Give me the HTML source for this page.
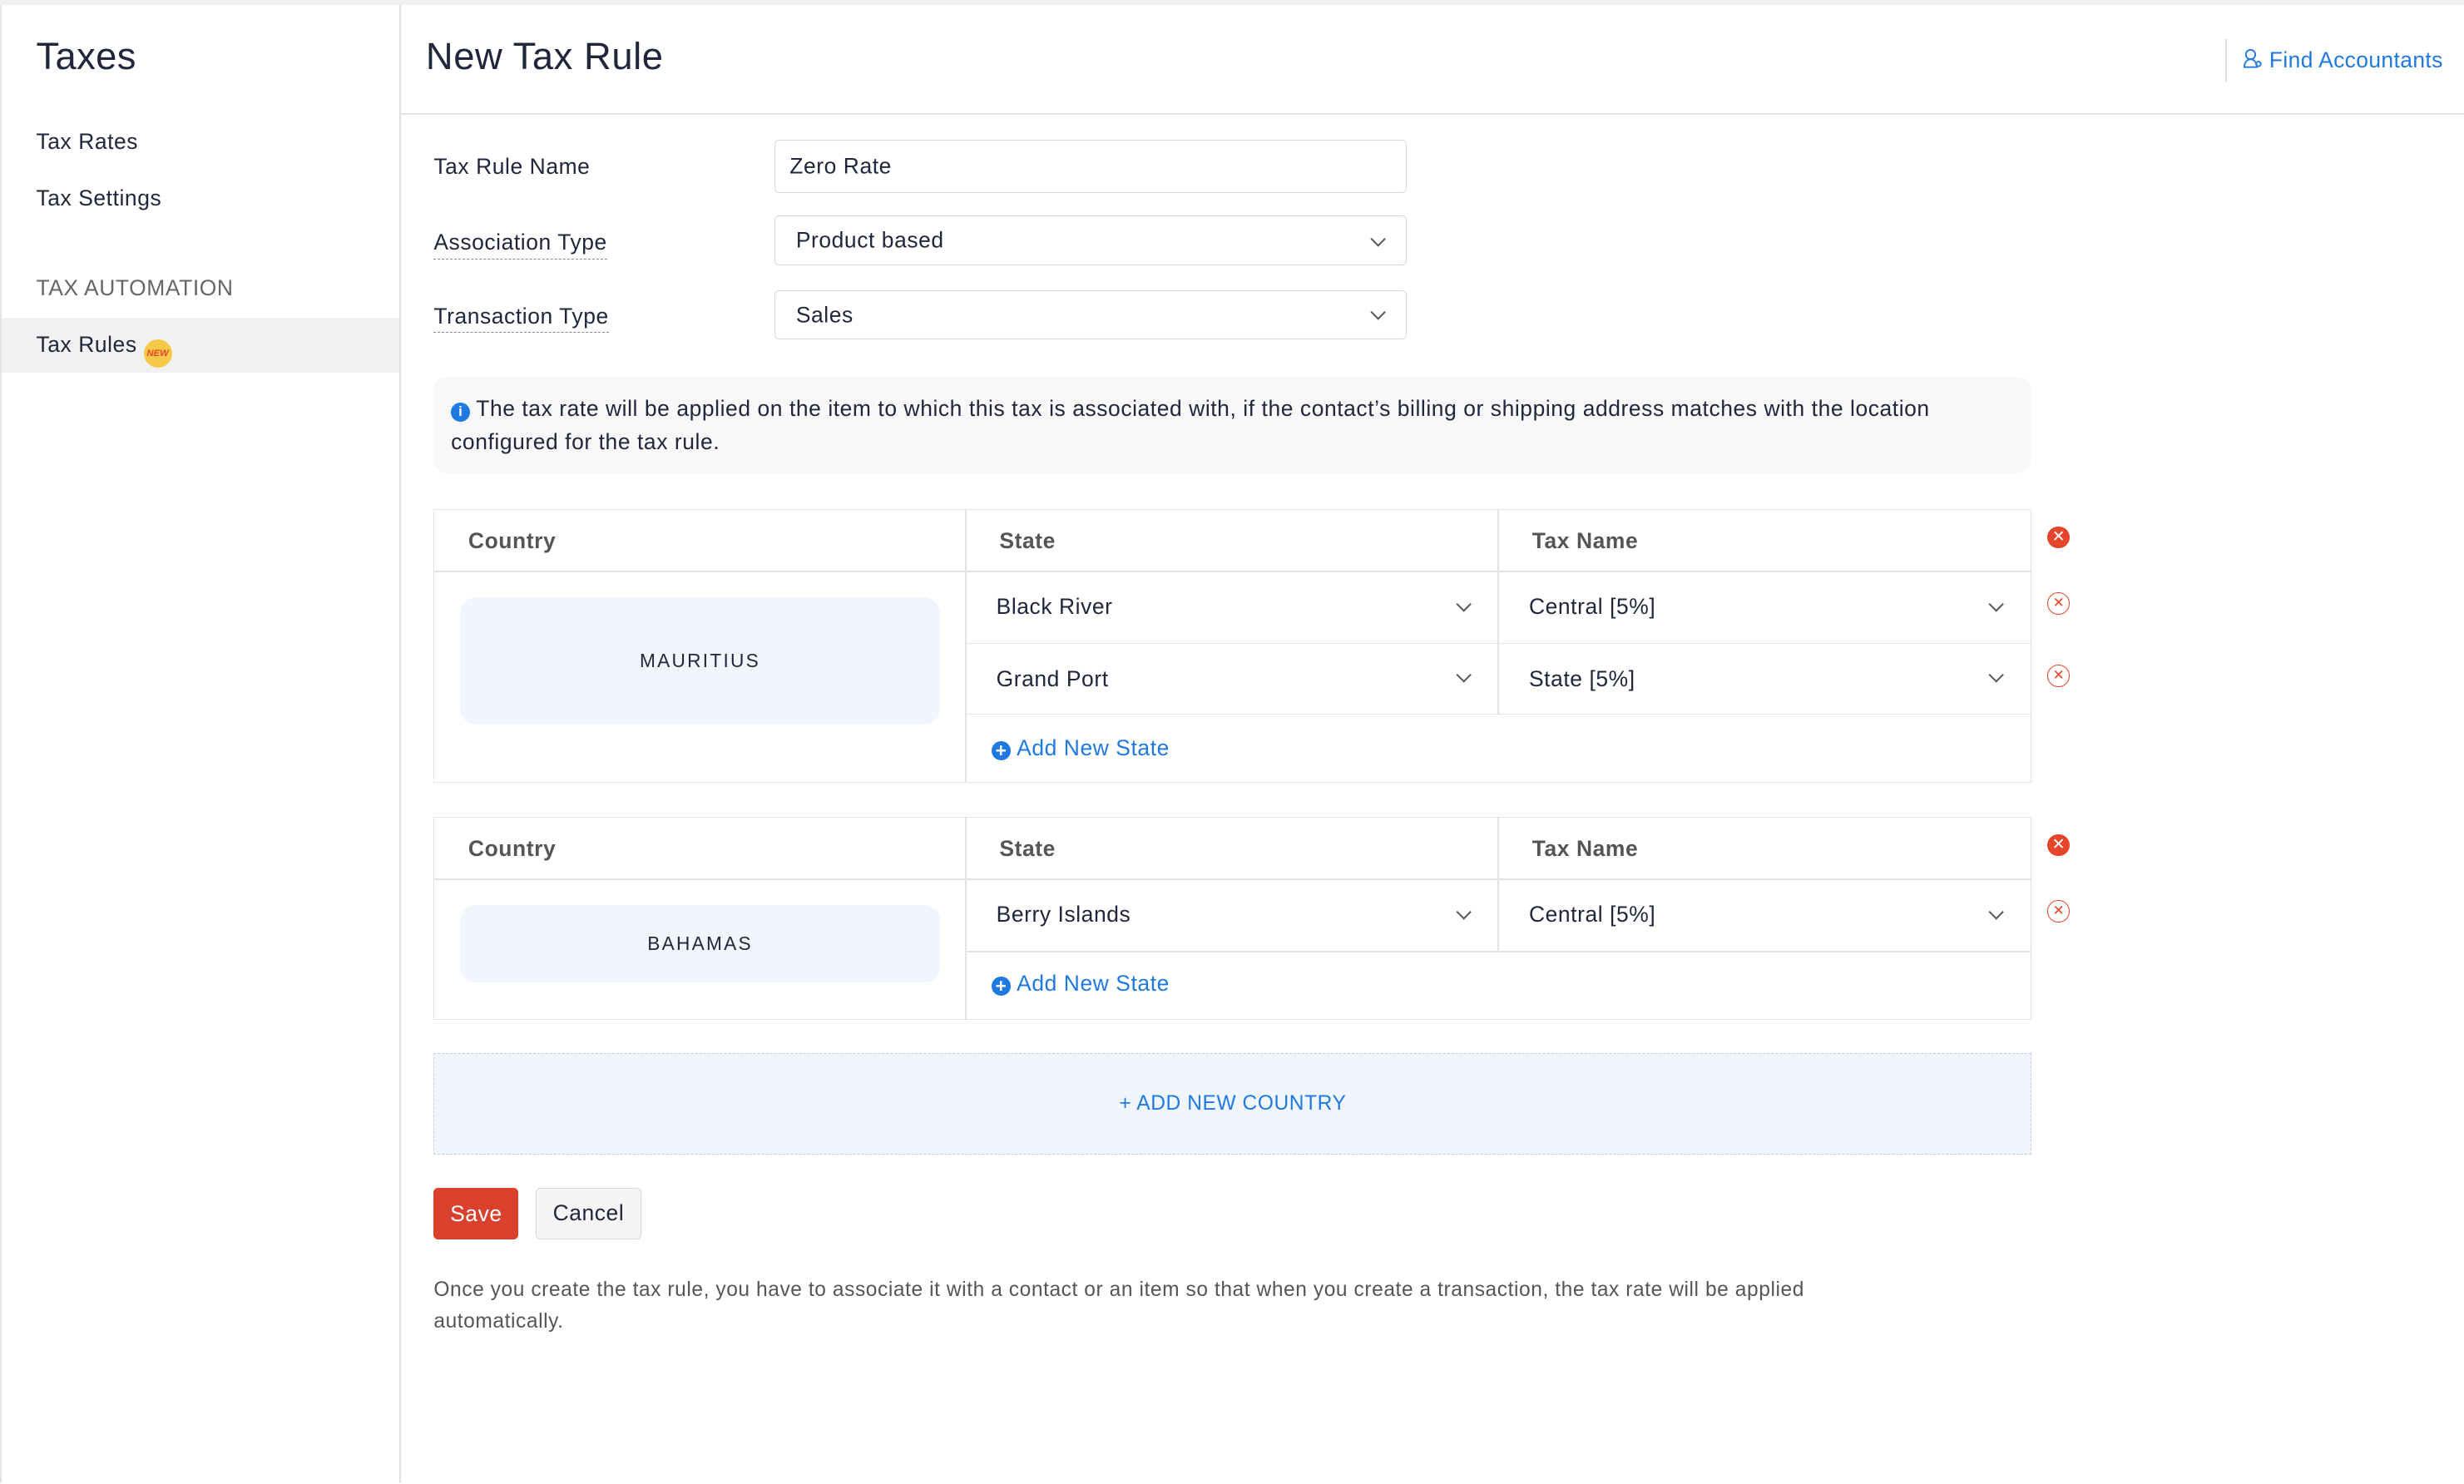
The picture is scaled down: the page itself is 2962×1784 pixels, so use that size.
<!DOCTYPE html>
<html><head><meta charset="utf-8"><style>
html,body{margin:0;padding:0;background:#fff;}
body{width:2962px;height:1784px;overflow:hidden;}
#r{zoom:1.8890;width:1568px;height:944px;position:relative;font-family:"Liberation Sans",sans-serif;color:#21263c;font-size:14px;letter-spacing:0.3px;}
.a{position:absolute;}
.lbl{font-size:14px;}
.dash{border-bottom:1px dashed #888;padding-bottom:2px;}
.inp{position:absolute;left:493px;width:402px;border:1px solid #d5d8de;border-radius:3px;background:#fff;box-sizing:border-box;}
.inp span{position:absolute;top:50%;transform:translateY(-50%);}
.chev{position:absolute;width:6px;height:6px;border-right:1.5px solid #555;border-bottom:1.5px solid #555;transform:rotate(45deg);}
.cell{position:absolute;box-sizing:border-box;}
.hd{font-weight:bold;color:#555;font-size:14px;}
.pill{position:absolute;left:293px;width:305px;background:#f1f6fe;border-radius:10px;display:flex;align-items:center;justify-content:center;font-size:12px;letter-spacing:1.2px;color:#21263c;}
.xf{position:absolute;left:1303px;width:14px;height:14px;border-radius:50%;background:#e5462b;color:#fff;font-size:10px;line-height:14px;text-align:center;letter-spacing:0;}
.xo{position:absolute;left:1303px;width:13px;height:13px;border-radius:50%;border:1px solid #e5462b;color:#e5462b;font-size:9px;line-height:13px;text-align:center;letter-spacing:0;}
.blue{color:#2079e0;}
.plus{display:inline-block;width:12px;height:12px;border-radius:50%;background:#2079e0;color:#fff;font-size:12px;line-height:12px;text-align:center;vertical-align:-1px;margin-right:4px;font-weight:bold;letter-spacing:0;}
</style></head><body><div id="r">
<div class="a" style="left:0;top:0;width:1568px;height:3px;background:#f1f1f1"></div>
<div class="a" style="left:0;top:3px;width:1px;height:941px;background:#e4e4e4"></div>
<div class="a" style="left:254px;top:3px;width:1px;height:941px;background:#e0e0e0"></div>
<div class="a" style="left:23px;top:22px;font-size:24px;font-weight:500;letter-spacing:0.2px">Taxes</div>
<div class="a" style="left:23px;top:82px">Tax Rates</div>
<div class="a" style="left:23px;top:118px">Tax Settings</div>
<div class="a" style="left:23px;top:175px;color:#666">TAX AUTOMATION</div>
<div class="a" style="left:1px;top:202px;width:253px;height:35px;background:#f1f1f1"></div>
<div class="a" style="left:23px;top:211px">Tax Rules <span style="display:inline-block;width:18px;height:18px;border-radius:50%;background:#f7c948;color:#e5462b;font-size:6px;line-height:18px;text-align:center;font-style:italic;font-weight:bold;vertical-align:-3px;letter-spacing:0">NEW</span></div>

<div class="a" style="left:271px;top:22px;font-size:24px;letter-spacing:0.3px">New Tax Rule</div>
<div class="a" style="left:255px;top:72px;width:1313px;height:1px;background:#dfe2e6"></div>
<div class="a" style="left:1416px;top:25px;width:1px;height:27px;background:#ddd"></div>
<div class="a blue" style="left:1427px;top:30px;font-size:14px;letter-spacing:0.2px"><svg width="13" height="13" viewBox="0 0 13 13" style="vertical-align:-1px"><circle cx="5" cy="4" r="3" fill="none" stroke="#2079e0"/><path d="M1 12c0-3 2-5 4-5s4 2 4 5z" fill="none" stroke="#2079e0"/><circle cx="10" cy="10" r="1.5" fill="none" stroke="#2079e0"/></svg> Find Accountants</div>

<div class="a lbl" style="left:276px;top:98px">Tax Rule Name</div>
<div class="a lbl dash" style="left:276px;top:146px">Association Type</div>
<div class="a lbl dash" style="left:276px;top:193px">Transaction Type</div>
<div class="inp" style="top:89px;height:34px;"><span style="left:9px">Zero Rate</span></div>
<div class="inp" style="top:137px;height:32px;"><span style="left:13px">Product based</span><div class="chev" style="right:14px;top:11px"></div></div>
<div class="inp" style="top:185px;height:31px;"><span style="left:13px">Sales</span><div class="chev" style="right:14px;top:10px"></div></div>

<div class="a" style="left:276px;top:240px;width:1016px;height:61px;background:#f8f8f8;border-radius:8px"></div>
<div class="a" style="left:287px;top:250px;line-height:21px;width:965px"><span style="display:inline-block;width:12px;height:12px;border-radius:50%;background:#2079e0;color:#fff;font-size:9px;line-height:12px;text-align:center;font-weight:bold;vertical-align:0;letter-spacing:0">i</span> The tax rate will be applied on the item to which this tax is associated with, if the contact’s billing or shipping address matches with the location configured for the tax rule.</div>

<!-- table 1 -->
<div class="cell" style="left:276px;top:324px;width:1017px;height:174px;border:1px solid #e3e3e3"></div>
<div class="a" style="left:614px;top:324px;width:1px;height:174px;background:#e3e3e3"></div>
<div class="a" style="left:953px;top:324px;width:1px;height:130px;background:#e3e3e3"></div>
<div class="a" style="left:276px;top:363px;width:1016px;height:1px;background:#e3e3e3"></div>
<div class="a" style="left:614px;top:409px;width:678px;height:1px;background:#e3e3e3"></div>
<div class="a" style="left:614px;top:454px;width:678px;height:1px;background:#e3e3e3"></div>
<div class="a hd" style="left:298px;top:336px">Country</div>
<div class="a hd" style="left:636px;top:336px">State</div>
<div class="a hd" style="left:975px;top:336px">Tax Name</div>
<div class="pill" style="top:380px;height:81px">MAURITIUS</div>
<div class="a" style="left:634px;top:378px">Black River</div><div class="chev" style="left:928px;top:381px"></div>
<div class="a" style="left:973px;top:378px">Central [5%]</div><div class="chev" style="left:1267px;top:381px"></div>
<div class="a" style="left:634px;top:424px">Grand Port</div><div class="chev" style="left:928px;top:426px"></div>
<div class="a" style="left:973px;top:424px">State [5%]</div><div class="chev" style="left:1267px;top:426px"></div>
<div class="a blue" style="left:631px;top:468px"><span class="plus">+</span>Add New State</div>
<div class="xf" style="top:335px">✕</div>
<div class="xo" style="top:377px">✕</div>
<div class="xo" style="top:423px">✕</div>

<!-- table 2 -->
<div class="cell" style="left:276px;top:520px;width:1017px;height:129px;border:1px solid #e3e3e3"></div>
<div class="a" style="left:614px;top:520px;width:1px;height:129px;background:#e3e3e3"></div>
<div class="a" style="left:953px;top:520px;width:1px;height:85px;background:#e3e3e3"></div>
<div class="a" style="left:276px;top:559px;width:1016px;height:1px;background:#e3e3e3"></div>
<div class="a" style="left:614px;top:605px;width:678px;height:1px;background:#e3e3e3"></div>
<div class="a hd" style="left:298px;top:532px">Country</div>
<div class="a hd" style="left:636px;top:532px">State</div>
<div class="a hd" style="left:975px;top:532px">Tax Name</div>
<div class="pill" style="top:576px;height:49px">BAHAMAS</div>
<div class="a" style="left:634px;top:574px">Berry Islands</div><div class="chev" style="left:928px;top:577px"></div>
<div class="a" style="left:973px;top:574px">Central [5%]</div><div class="chev" style="left:1267px;top:577px"></div>
<div class="a blue" style="left:631px;top:618px"><span class="plus">+</span>Add New State</div>
<div class="xf" style="top:531px">✕</div>
<div class="xo" style="top:573px">✕</div>

<div class="a" style="left:276px;top:670px;width:1017px;height:65px;background:#f1f6fe;border:1px dashed #c2cee0;box-sizing:border-box;text-align:center;line-height:63px;font-size:13px"><span class="blue">+ ADD NEW COUNTRY</span></div>

<div class="a" style="left:276px;top:756px;width:54px;height:33px;background:#d9412d;border-radius:3px;color:#fff;text-align:center;line-height:33px">Save</div>
<div class="a" style="left:341px;top:756px;width:67px;height:33px;background:#f5f5f5;border:1px solid #d6d6d6;box-sizing:border-box;border-radius:3px;text-align:center;line-height:31px">Cancel</div>
<div class="a" style="left:276px;top:811px;width:900px;line-height:20px;font-size:13px;color:#555">Once you create the tax rule, you have to associate it with a contact or an item so that when you create a transaction, the tax rate will be applied automatically.</div>
</div></body></html>
